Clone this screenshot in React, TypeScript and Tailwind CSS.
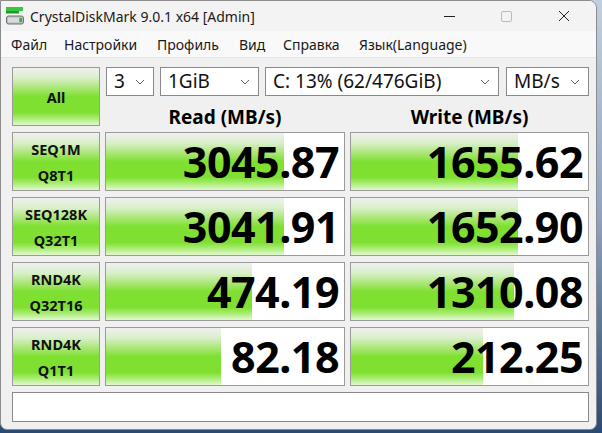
import React from "react";

const F = { fontFamily: '"Noto Sans", "Open Sans", Arial, sans-serif' };

const rows = [
  { a: "SEQ1M", b: "Q8T1", r: "3045.87", rw: 178, w: "1655.62", ww: 167 },
  { a: "SEQ128K", b: "Q32T1", r: "3041.91", rw: 178, w: "1652.90", ww: 167 },
  { a: "RND4K", b: "Q32T16", r: "474.19", rw: 146, w: "1310.08", ww: 163 },
  { a: "RND4K", b: "Q1T1", r: "82.18", rw: 115, w: "212.25", ww: 132 },
];

const greenGrad =
  "bg-[linear-gradient(to_bottom,#f0f0f0_0%,#d8efc8_18%,#a8e672_36%,#7fe032_50%,#7fe032_78%,#a8ec70_88%,#e2f8d0_100%)]";

function Chevron() {
  return (
    <svg width="10" height="6" viewBox="0 0 10 6" className="shrink-0">
      <path d="M1 1 L5 5 L9 1" fill="none" stroke="#606060" strokeWidth="1" />
    </svg>
  );
}

function Combo({ w, text }: { w: string; text: string }) {
  return (
    <div
      className={`${w} shrink-0 h-[29px] bg-white border border-[#8a8a8a] flex items-center justify-between pl-[7px] pr-[8px] text-[19px] text-[#111]`}
    >
      <span className="leading-none">{text}</span>
      <Chevron />
    </div>
  );
}

function Label({ a, b }: { a: string; b?: string }) {
  return (
    <div
      className={`h-[59px] border border-[#9a9a9a] ${greenGrad} flex flex-col items-center justify-center text-[14.5px] font-bold text-[#111] leading-[26px]`}
    >
      <span>{a}</span>
      {b && <span>{b}</span>}
    </div>
  );
}

function Value({ v, bar }: { v: string; bar: number }) {
  return (
    <div className="relative h-[59px] border border-[#9a9a9a] bg-white overflow-hidden">
      <div className={`absolute left-0 top-0 bottom-0 ${greenGrad}`} style={{ width: bar }} />
      <div className="relative h-full flex items-center justify-end pr-[5px] text-[43px] font-bold text-black leading-none tracking-[-0.5px]">
        {v}
      </div>
    </div>
  );
}

export default function App() {
  return (
    <div
      className="w-[602px] h-[433px] bg-[linear-gradient(to_bottom,#c3cfe0_0%,#8fa3c0_50%,#2b4a72_100%)] overflow-hidden"
      style={F}
    >
      <div className="w-[597px] h-[430px] bg-[#f0f0f0] border border-[#8c8c8c] rounded-tr-[8px] rounded-b-[7px] overflow-hidden flex flex-col">
        {/* title bar */}
        <div className="h-[30px] bg-[#f3f3f3] flex items-center shrink-0">
          <svg width="20" height="20" viewBox="0 0 20 20" className="ml-[4px] mr-[5px]">
            <rect x="1" y="1" width="17" height="4" fill="#3cc43c" />
            <rect x="1" y="5" width="13" height="2.5" fill="#1e9a2a" />
            <rect x="1.5" y="10" width="17" height="8" rx="2" fill="#b8bcc0" stroke="#6e7378" strokeWidth="1" />
            <rect x="3" y="11.5" width="11" height="5" fill="#d8dadc" />
            <rect x="14.5" y="12" width="2.5" height="4" fill="#2eb82e" />
          </svg>
          <span className="text-[14px] text-[#1a1a1a]">CrystalDiskMark 9.0.1 x64 [Admin]</span>
          <div className="flex-1" />
          <div className="w-[57px] h-[30px] flex items-center justify-center">
            <div className="w-[11px] h-[1px] bg-[#222]" />
          </div>
          <div className="w-[57px] h-[30px] flex items-center justify-center">
            <div className="w-[11px] h-[11px] border border-[#bbb] rounded-[2px]" />
          </div>
          <div className="w-[57px] h-[30px] flex items-center justify-center">
            <svg width="12" height="12" viewBox="0 0 12 12">
              <path d="M1 1 L11 11 M11 1 L1 11" stroke="#222" strokeWidth="1" />
            </svg>
          </div>
          <div className="w-[4px]" />
        </div>
        {/* menu */}
        <div className="h-[27px] bg-[#f9f9f9] border-b border-[#e3e3e3] flex items-center pl-[10px] text-[14px] text-[#1a1a1a] shrink-0">
          <span className="w-[53px]">Файл</span>
          <span className="w-[93px]">Настройки</span>
          <span className="w-[82px]">Профиль</span>
          <span className="w-[44px]">Вид</span>
          <span className="w-[76px]">Справка</span>
          <span>Язык(Language)</span>
        </div>
        {/* content */}
        <div className="pl-[11px] pt-[9px] grid grid-cols-[88px_240px_239px] gap-x-[5px] gap-y-[6px]">
          <Label a="All" />
          <div className="col-span-2 flex flex-col">
            <div className="flex pl-[1px]">
              <Combo w="w-[48px]" text="3" />
              <div className="w-[6px] shrink-0" />
              <Combo w="w-[99px]" text="1GiB" />
              <div className="w-[6px] shrink-0" />
              <Combo w="w-[234px]" text="C: 13% (62/476GiB)" />
              <div className="w-[7px] shrink-0" />
              <Combo w="w-[83px]" text="MB/s" />
            </div>
            <div className="flex-1 grid grid-cols-[240px_239px] gap-x-[5px] items-end text-[19px] font-bold text-black leading-[18px]">
              <div className="text-center">Read (MB/s)</div>
              <div className="text-center">Write (MB/s)</div>
            </div>
          </div>
          {rows.map((r, i) => (
            <React.Fragment key={i}>
              <Label a={r.a} b={r.b} />
              <Value v={r.r} bar={r.rw} />
              <Value v={r.w} bar={r.ww} />
            </React.Fragment>
          ))}
          <div className="col-span-3 h-[30px] bg-white border border-[#8a8a8a]" />
        </div>
      </div>
    </div>
  );
}
